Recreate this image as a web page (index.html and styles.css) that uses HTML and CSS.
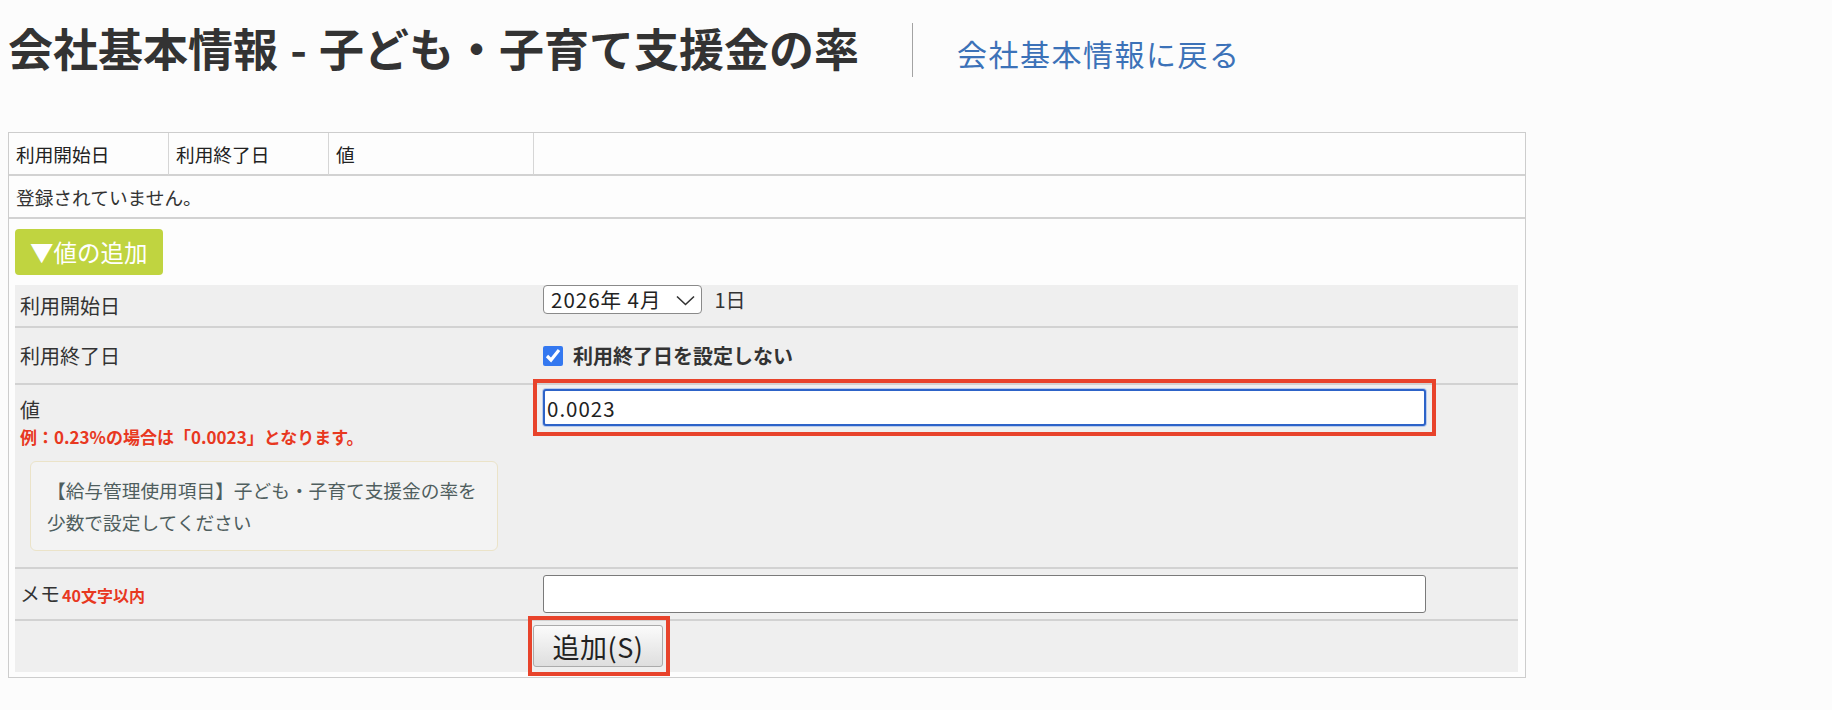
FILE: index.html
```html
<!DOCTYPE html>
<html lang="ja">
<head>
    <meta charset="UTF-8">
    <title>会社基本情報 - 子ども・子育て支援金の率</title>
    <link rel="stylesheet" href="styles.css">
</head>
<body>

    <div class="page-head">
        <h1 class="page-title">会社基本情報 - 子ども・子育て支援金の率</h1>
        <span class="head-sep"></span>
        <a class="back-link" href="#">会社基本情報に戻る</a>
    </div>

    <table class="rate-list">
        <tr>
            <th class="col-start">利用開始日</th>
            <th class="col-end">利用終了日</th>
            <th class="col-value">値</th>
            <th class="col-rest"></th>
        </tr>
        <tr>
            <td colspan="4" class="empty">登録されていません。</td>
        </tr>
        <tr>
            <td colspan="4" class="add-cell">
                <button class="toggle-btn">▼値の追加</button>

                <div class="add-form">
                    <div class="form-row row-start">
                        <div class="form-label">利用開始日</div>
                        <div class="form-value">
                            <span class="select-wrap">
                                <select class="month-select">
                                    <option selected>2026年 4月</option>
                                    <option>2026年 5月</option>
                                </select>
                                <svg class="chevron" width="19" height="11" viewBox="0 0 19 11"><path d="M1 1.5 L9.5 9.5 L18 1.5" fill="none" stroke="#333" stroke-width="1.6"/></svg>
                            </span>
                            <span class="day">1日</span>
                        </div>
                    </div>

                    <div class="form-row row-end">
                        <div class="form-label">利用終了日</div>
                        <div class="form-value">
                            <label class="check-label"><input type="checkbox" checked> 利用終了日を設定しない</label>
                        </div>
                    </div>

                    <div class="form-row row-rate">
                        <div class="form-label">
                            <div>値</div>
                            <div class="note">例：0.23%の場合は「0.0023」となります。</div>
                            <div class="info-box">【給与管理使用項目】子ども・子育て支援金の率を少数で設定してください</div>
                        </div>
                        <div class="form-value">
                            <span class="mark mark-input"><input type="text" class="text-input focused" value="0.0023"></span>
                        </div>
                    </div>

                    <div class="form-row row-memo">
                        <div class="form-label">メモ<span class="limit">40文字以内</span></div>
                        <div class="form-value">
                            <input type="text" class="text-input">
                        </div>
                    </div>

                    <div class="form-row row-submit">
                        <div class="form-label"></div>
                        <div class="form-value">
                            <span class="mark mark-btn"><button class="submit-btn">追加(S)</button></span>
                        </div>
                    </div>
                </div>
            </td>
        </tr>
    </table>

</body>
</html>
```

FILE: styles.css
```css
body {
    margin: 8px;
    background: #fcfcfc;
    color: #333;
    font-family: "Noto Sans CJK JP", "Noto Sans", sans-serif;
}

/* Header */
.page-head {
    display: flex;
    align-items: center;
    height: 84px;
    margin-bottom: 40px;
}

.page-title {
    margin: 0 53px 0 0;
    padding-bottom: 5px;
    font-size: 45px;
    font-weight: 700;
    word-spacing: 2px;
    color: #333;
}

.head-sep {
    width: 1px;
    height: 54px;
    background: #a3a3a3;
}

.back-link {
    margin-left: 44px;
    padding-top: 6px;
    font-size: 30px;
    letter-spacing: 1.5px;
    color: #3c72b8;
    text-decoration: none;
}

/* List table */
.rate-list {
    width: 1518px;
    border: 1px solid #cdcdcd;
    border-spacing: 0;
    background: #fdfdfd;
    font-size: 18.7px;
}

.rate-list th {
    box-sizing: border-box;
    padding: 7px 7px;
    line-height: 27px;
    font-weight: 400;
    text-align: left;
    color: #222;
    border-bottom: 2px solid #d2d2d2;
    border-right: 1px solid #d6d6d6;
}

.rate-list th.col-rest {
    border-right: none;
}

.col-start { width: 160px; }
.col-end { width: 160px; }
.col-value { width: 205px; }

.empty {
    padding: 7px 7px;
    line-height: 27px;
    color: #333;
    border-bottom: 2px solid #d2d2d2;
}

.add-cell {
    padding: 10px 7px 5px 6px;
}

.toggle-btn {
    display: block;
    height: 46px;
    padding: 0 15px;
    margin-bottom: 10px;
    border: none;
    border-radius: 4px;
    background: #c0d440;
    color: #fff;
    font-family: inherit;
    font-size: 23.5px;
}

/* Add form */
.add-form {
    background: #efefef;
    font-size: 20px;
    color: #333;
}

.form-row {
    display: flex;
    box-sizing: border-box;
}

.form-row + .form-row {
    border-top: 2px solid #d2d2d2;
}

.form-label {
    box-sizing: border-box;
    width: 518px;
    padding-left: 5px;
    line-height: 30px;
}

.form-value {
    flex: 1;
    padding-left: 10px;
}

.row-start { height: 41px; }
.row-start .form-label { align-self: center; }

.row-end { height: 57px; align-items: center; }

.row-rate { height: 184px; }
.row-rate .form-label { padding-top: 10px; }
.row-rate .form-value { padding-top: 4px; }

.row-memo { height: 52px; align-items: center; }

.row-submit { height: 53px; }
.row-submit .form-value { padding-left: 0; padding-top: 4px; }

.select-wrap {
    position: relative;
    display: inline-block;
    vertical-align: top;
}

.month-select {
    appearance: none;
    width: 159px;
    height: 29px;
    padding: 0 0 0 7px;
    border: 1px solid #8a8a8a;
    border-radius: 4px;
    background: #fff;
    font-family: inherit;
    font-size: 20.5px;
    letter-spacing: 1px;
    line-height: 27px;
    color: #222;
}

.chevron {
    position: absolute;
    right: 7px;
    top: 10px;
    pointer-events: none;
}

.day {
    margin-left: 8px;
    line-height: 29px;
    vertical-align: top;
}

.check-label {
    display: flex;
    align-items: center;
    gap: 10px;
    font-weight: 700;
}

.check-label input {
    width: 20px;
    height: 20px;
    margin: 0;
    accent-color: #3478f0;
}

.note {
    font-size: 17px;
    line-height: 24px;
    font-weight: 700;
    color: #e8381f;
}

.limit {
    margin-left: 2px;
    font-size: 16px;
    font-weight: 700;
    color: #e8381f;
}

.info-box {
    box-sizing: border-box;
    width: 468px;
    height: 90px;
    margin: 12px 0 0 10px;
    padding: 12px 14px 0 16px;
    border: 1px solid #ebe3c8;
    border-radius: 6px;
    background: #f3f3f3;
    color: #4f5e5e;
    font-size: 18.7px;
    line-height: 32px;
}

.text-input {
    box-sizing: border-box;
    width: 883px;
    height: 38px;
    padding: 0 4px;
    border: 1px solid #7a7a7a;
    border-radius: 3px;
    background: #fff;
    font-family: inherit;
    font-size: 20.5px;
    letter-spacing: 1px;
    color: #222;
    vertical-align: top;
}

.text-input.focused {
    height: 37px;
    border: 2px solid #2d63c8;
    box-shadow: 0 0 0 1px #b9cbed;
    outline: none;
    padding: 0 2px;
}

.submit-btn {
    width: 130px;
    height: 42px;
    padding: 0;
    border: 1px solid #ababab;
    border-radius: 3px;
    background: linear-gradient(#fbfbfb, #dedede);
    font-family: inherit;
    font-size: 27px;
    letter-spacing: 0.5px;
    color: #222;
}

/* Red annotation frames */
.mark {
    position: relative;
    display: inline-block;
    vertical-align: top;
}

.mark::after {
    content: "";
    position: absolute;
    border: 4px solid #e8432b;
    pointer-events: none;
}

.mark-input::after {
    inset: -10px -10px -10px -10px;
}

.mark-btn::after {
    inset: -9px -7px -9px -5px;
}
```
